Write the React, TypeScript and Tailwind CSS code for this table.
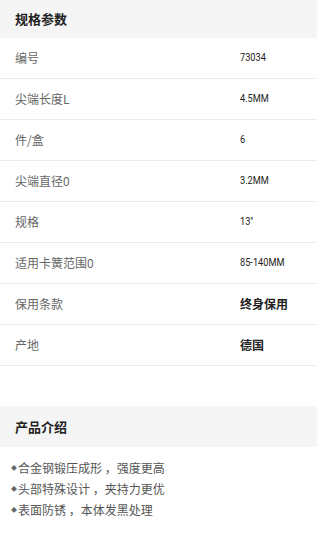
import React from 'react';

const specs: { label: string; value: string; cjk?: boolean }[] = [
  { label: '编号', value: '73034' },
  { label: '尖端长度L', value: '4.5MM' },
  { label: '件/盒', value: '6' },
  { label: '尖端直径0', value: '3.2MM' },
  { label: '规格', value: '13"' },
  { label: '适用卡簧范围0', value: '85-140MM' },
  { label: '保用条款', value: '终身保用', cjk: true },
  { label: '产地', value: '德国', cjk: true },
];

const intro = ['合金钢锻压成形 ，强度更高', '头部特殊设计 ，夹持力更优', '表面防锈 ，本体发黑处理'];

const cjkFont = "font-['Noto_Sans_CJK_SC','Noto_Sans',sans-serif]";

export default function App() {
  return (
    <div className={`w-[317px] min-h-[533px] bg-white ${cjkFont}`}>
      {/* spec header */}
      <div className="h-[38px] bg-[#f5f5f5] flex items-center px-[15px]">
        <span className="text-[13px] font-bold text-[#222]">规格参数</span>
      </div>

      {specs.map((s) => (
        <div key={s.label} className="h-[41px] border-b border-[#ececec] flex items-center">
          <div className="w-[240px] pl-[15px] text-[12px] text-[#666]">{s.label}</div>
          {s.cjk ? (
            <div className="text-[12px] font-bold text-[#222]">{s.value}</div>
          ) : (
            <div className="inline-block origin-left scale-x-[0.8] text-[11.5px] text-[#222] font-['Roboto',sans-serif]">
              {s.value}
            </div>
          )}
        </div>
      ))}

      <div className="h-[40px]" />

      {/* intro header */}
      <div className="h-[41px] bg-[#f5f5f5] flex items-center px-[15px]">
        <span className="text-[13px] font-bold text-[#222]">产品介绍</span>
      </div>

      <div className="pt-[10px] pl-[11px]">
        {intro.map((t) => (
          <div key={t} className="h-[21px] flex items-center text-[12px] text-[#555]">
            <span className="text-[6px] text-[#666] mr-[1px]">◆</span>
            <span>{t}</span>
          </div>
        ))}
      </div>
    </div>
  );
}
